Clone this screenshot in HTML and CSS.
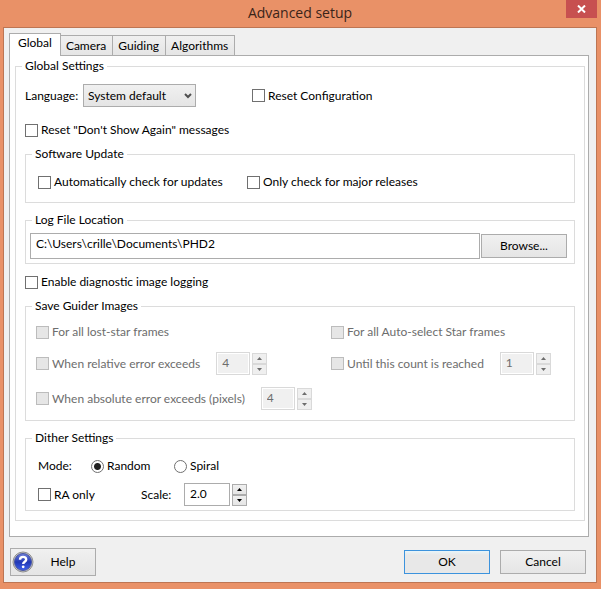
FILE: index.html
```html
<!DOCTYPE html>
<html lang="en">

<head>
   <meta charset="UTF-8">
   <meta name="viewport" content="width=device-width, initial-scale=1.0">
   <title>Advanced setup</title>
   <link rel="stylesheet" href="styles.css">
</head>

<body>
   <header class="titlebar">
      <h1>Advanced setup</h1>
      <button class="close" type="button" aria-label="Close">
         <svg width="9" height="8" viewBox="0 0 9 8"><path d="M1 0.5L8 7.5M8 0.5L1 7.5" stroke="#fff" stroke-width="2" /></svg>
      </button>
   </header>

   <form class="client">
      <div class="tabs" role="tablist">
         <button class="tab active" type="button" role="tab" aria-selected="true">Global</button>
         <button class="tab" type="button" role="tab">Camera</button>
         <button class="tab" type="button" role="tab">Guiding</button>
         <button class="tab" type="button" role="tab">Algorithms</button>
      </div>

      <main class="panel">
         <fieldset class="global">
            <legend>Global Settings</legend>
            <div class="row language-row">
               <label class="language-label" for="language">Language:</label>
               <div class="select-wrap">
                  <select id="language">
                     <option>System default</option>
                  </select>
                  <svg class="chevron" width="8" height="6" viewBox="0 0 8 6"><path d="M1 1L4 4L7 1" fill="none" stroke="#505050" stroke-width="2" /></svg>
               </div>
               <label class="check reset-config"><input type="checkbox">Reset Configuration</label>
            </div>
            <label class="check reset-messages"><input type="checkbox">Reset "Don't Show Again" messages</label>

            <fieldset class="group update">
               <legend>Software Update</legend>
               <div class="row">
                  <label class="check auto-check"><input type="checkbox">Automatically check for updates</label>
                  <label class="check"><input type="checkbox">Only check for major releases</label>
               </div>
            </fieldset>

            <fieldset class="group log">
               <legend>Log File Location</legend>
               <div class="row log-row">
                  <input class="text path" type="text" value="C:\Users\crille\Documents\PHD2" aria-label="Log File Location">
                  <button class="btn" type="button">Browse...</button>
               </div>
            </fieldset>

            <label class="check logging"><input type="checkbox">Enable diagnostic image logging</label>

            <fieldset class="group images" disabled>
               <legend>Save Guider Images</legend>
               <div class="image-grid">
                  <label class="check"><input type="checkbox">For all lost-star frames</label>
                  <label class="check"><input type="checkbox">For all Auto-select Star frames</label>
                  <div class="row spin-row">
                     <label class="check"><input type="checkbox">When relative error exceeds</label>
                     <div class="spin">
                        <input class="text" type="text" value="4" aria-label="Relative error">
                        <div class="arrows">
                           <button type="button" aria-label="Increase"><svg width="5" height="3" viewBox="0 0 5 3"><path d="M0 3L2.5 0L5 3Z" fill="currentColor" /></svg></button>
                           <button type="button" aria-label="Decrease"><svg width="5" height="3" viewBox="0 0 5 3"><path d="M0 0L2.5 3L5 0Z" fill="currentColor" /></svg></button>
                        </div>
                     </div>
                  </div>
                  <div class="row spin-row">
                     <label class="check"><input type="checkbox">Until this count is reached</label>
                     <div class="spin">
                        <input class="text" type="text" value="1" aria-label="Image count">
                        <div class="arrows">
                           <button type="button" aria-label="Increase"><svg width="5" height="3" viewBox="0 0 5 3"><path d="M0 3L2.5 0L5 3Z" fill="currentColor" /></svg></button>
                           <button type="button" aria-label="Decrease"><svg width="5" height="3" viewBox="0 0 5 3"><path d="M0 0L2.5 3L5 0Z" fill="currentColor" /></svg></button>
                        </div>
                     </div>
                  </div>
                  <div class="row spin-row">
                     <label class="check"><input type="checkbox">When absolute error exceeds (pixels)</label>
                     <div class="spin">
                        <input class="text" type="text" value="4" aria-label="Absolute error">
                        <div class="arrows">
                           <button type="button" aria-label="Increase"><svg width="5" height="3" viewBox="0 0 5 3"><path d="M0 3L2.5 0L5 3Z" fill="currentColor" /></svg></button>
                           <button type="button" aria-label="Decrease"><svg width="5" height="3" viewBox="0 0 5 3"><path d="M0 0L2.5 3L5 0Z" fill="currentColor" /></svg></button>
                        </div>
                     </div>
                  </div>
               </div>
            </fieldset>

            <fieldset class="group dither">
               <legend>Dither Settings</legend>
               <div class="row">
                  <span class="mode-label">Mode:</span>
                  <label class="check random"><input type="radio" name="mode" checked>Random</label>
                  <label class="check"><input type="radio" name="mode">Spiral</label>
               </div>
               <div class="row scale-row">
                  <label class="check ra-only"><input type="checkbox">RA only</label>
                  <label class="scale-label" for="scale">Scale:</label>
                  <div class="spin wide">
                     <input class="text" id="scale" type="text" value="2.0">
                     <div class="arrows">
                        <button type="button" aria-label="Increase"><svg width="5" height="3" viewBox="0 0 5 3"><path d="M0 3L2.5 0L5 3Z" fill="currentColor" /></svg></button>
                        <button type="button" aria-label="Decrease"><svg width="5" height="3" viewBox="0 0 5 3"><path d="M0 0L2.5 3L5 0Z" fill="currentColor" /></svg></button>
                     </div>
                  </div>
               </div>
            </fieldset>
         </fieldset>
      </main>

      <footer class="buttons">
         <button class="btn help" type="button">
            <svg width="22" height="22" viewBox="0 0 22 22">
               <defs>
                  <linearGradient id="ball" x1="0" y1="0" x2="0" y2="1">
                     <stop offset="0" stop-color="#6f80dc" />
                     <stop offset="0.5" stop-color="#2138b4" />
                     <stop offset="1" stop-color="#3f62ee" />
                  </linearGradient>
               </defs>
               <circle cx="11" cy="11" r="10" fill="#c4c4c8" stroke="#909090" stroke-width="1" />
               <circle cx="11" cy="11" r="8.5" fill="url(#ball)" stroke="#4a57a0" />
               <path d="M8 8.7C8 5 14.2 5 14.2 8.5C14.2 10.8 11.2 10.6 11.2 13" fill="none" stroke="#fff" stroke-width="2.4" />
               <circle cx="11.2" cy="15.8" r="1.4" fill="#fff" />
            </svg>
            <span>Help</span>
         </button>
         <button class="btn ok" type="button">OK</button>
         <button class="btn" type="button">Cancel</button>
      </footer>
   </form>
</body>

</html>
```
FILE: styles.css
```css
* {
   margin: 0;
   padding: 0;
   box-sizing: border-box;
}

body {
   background-color: #e99167;
   color: #000;
   font-family: Lato, "Segoe UI", sans-serif;
   font-size: 12px;
   line-height: 16px;
   padding: 0 4px 6px 3px;
}

button,
input,
select {
   font: inherit;
   color: inherit;
}

svg {
   display: block;
}

/* title bar */
.titlebar {
   display: grid;
   grid-template-columns: 1fr auto 1fr;
   height: 27px;
}

h1 {
   grid-column: 2;
   font-family: "Open Sans", "Segoe UI", sans-serif;
   font-size: 14px;
   font-weight: normal;
   line-height: 26px;
   color: #3a2419;
}

.close {
   justify-self: end;
   display: flex;
   align-items: center;
   justify-content: center;
   width: 31px;
   height: 18px;
   border: none;
   background-color: #c75050;
}

.client {
   background-color: #f0f0f0;
   border: 1px solid #bd7553;
   padding: 5px 7px 6px 5px;
}

/* tabs */
.tabs {
   display: flex;
   align-items: flex-end;
}

.tab {
   height: 20px;
   padding: 0 6px 0 5px;
   border: 1px solid #acacac;
   border-bottom: none;
   border-left-width: 0;
   background: linear-gradient(#f0f0f0, #e5e5e5);
}

.tab.active {
   height: 23px;
   padding: 0 8px 4px;
   margin-bottom: -1px;
   border-left-width: 1px;
   background: #fff;
   position: relative;
}

.panel {
   background-color: #fff;
   border: 1px solid #acacac;
   padding: 2px 3px 15px 5px;
}

/* group boxes */
fieldset {
   min-width: 0;
   border: 1px solid #dcdcdc;
   padding-left: var(--inset);
}

legend {
   margin-left: calc(6px - var(--inset));
   padding: 0 3px;
}

.global {
   --inset: 9px;
   padding-top: 10px;
   padding-right: 9px;
   padding-bottom: 9px;
}

.row {
   display: flex;
   align-items: center;
}

.check {
   display: flex;
   align-items: center;
   gap: 3px;
   white-space: nowrap;
}

.check input {
   appearance: none;
   flex: none;
   width: 13px;
   height: 13px;
   border: 1px solid #707070;
   background-color: #fff;
}

.check input[type="radio"] {
   border-radius: 50%;
}

.check input[type="radio"]:checked {
   background: radial-gradient(circle, #222 3px, #fff 4px);
}

.check input[type="checkbox"]:checked {
   background-color: #707070;
}

.language-label {
   width: 58px;
}

.select-wrap {
   display: grid;
   align-items: center;
}

.select-wrap select,
.chevron {
   grid-area: 1 / 1;
}

.select-wrap select {
   appearance: none;
   width: 113px;
   height: 23px;
   padding: 0 4px;
   border: 1px solid #acacac;
   border-radius: 0;
   background: linear-gradient(#f0f0f0, #e5e5e5);
}

.chevron {
   justify-self: end;
   margin-right: 4px;
   pointer-events: none;
}

.reset-config {
   margin-left: 56px;
}

.reset-messages {
   margin-top: 15px;
}

.group {
   margin-top: 8px;
}

.update {
   --inset: 12px;
   padding-top: 12px;
   padding-bottom: 12px;
}

.auto-check {
   width: 209px;
}

.log {
   --inset: 4px;
   margin-top: 9px;
   padding-top: 5px;
   padding-right: 7px;
   padding-bottom: 4px;
}

.log-row {
   gap: 1px;
}

.text {
   border: 1px solid #acacac;
   background-color: #fff;
}

.path {
   flex: 1;
   min-width: 0;
   height: 26px;
   padding: 0 5px 5px;
}

.btn {
   width: 86px;
   height: 24px;
   border: 1px solid #acacac;
   background: linear-gradient(#f0f0f0, #e5e5e5);
}

.logging {
   margin-top: 10px;
}

/* guider images */
.images {
   --inset: 10px;
   padding-top: 10px;
   padding-right: 7px;
   padding-bottom: 10px;
}

.image-grid {
   display: grid;
   grid-template-columns: 5fr 4fr;
   row-gap: 12px;
}

.spin-row {
   gap: 16px;
}

.spin {
   display: flex;
   align-items: center;
   gap: 2px;
}

.spin .text {
   width: 34px;
   height: 23px;
   padding: 0 5px 2px;
}

.spin.wide .text {
   width: 46px;
}

.arrows {
   display: grid;
}

.arrows button {
   display: flex;
   align-items: center;
   justify-content: center;
   width: 15px;
   height: 11px;
   border: 1px solid #acacac;
   background: linear-gradient(#f0f0f0, #e5e5e5);
}

.images .check,
.images .text,
.images .arrows {
   color: #6d6d6d;
}

.images .check input {
   border-color: #bcbcbc;
   background-color: #e6e6e6;
}

.images .text {
   border-color: #d9d9d9;
   background-color: #f0f0f0;
   box-shadow: inset 0 0 0 1px #fff;
}

.images .arrows button {
   border-color: #d9d9d9;
   background: #efefef;
}

/* dither */
.dither {
   --inset: 12px;
   margin-top: 9px;
   padding-top: 12px;
   padding-bottom: 4px;
}

.mode-label {
   width: 53px;
}

.random {
   width: 83px;
}

.scale-row {
   margin-top: 9px;
}

.ra-only {
   width: 103px;
}

.scale-label {
   width: 43px;
}

/* bottom buttons */
.buttons {
   display: flex;
   align-items: center;
   gap: 10px;
   padding: 11px 3px 0 1px;
}

.help {
   display: flex;
   align-items: center;
   height: 28px;
   padding: 0 1px;
   margin-right: auto;
}

.help span {
   flex: 1;
   padding-right: 2px;
}

.ok {
   border-color: #3c93dd;
   background: linear-gradient(#e9f5f9, #e8e8e8 4px);
}
```
